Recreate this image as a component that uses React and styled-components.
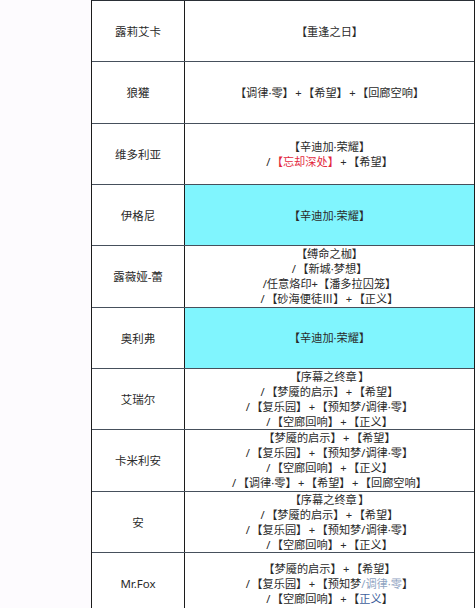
import React from 'react';
import styled, { createGlobalStyle } from 'styled-components';

const GlobalStyle = createGlobalStyle`
  html, body {
    margin: 0;
    padding: 0;
    background: #fdfbfe;
  }
  * {
    box-sizing: border-box;
  }
`;

const Page = styled.div`
  padding-left: 91px;
  height: 608px;
  overflow: hidden;
  font-family: "Noto Sans", "Noto Sans CJK SC", sans-serif;
  color: #2a2a2a;
`;

const Table = styled.div`
  width: 384px;
  border-top: 1px solid #2a2f36;
  border-left: 1px solid #1c1c1c;
  border-right: 1px solid #1c1c1c;
  background: #fff;
`;

const Row = styled.div`
  display: grid;
  grid-template-columns: 93px 1fr;
  height: 61.33px;
  border-bottom: 1px solid #46505c;
`;

const NameCell = styled.div`
  display: flex;
  align-items: center;
  justify-content: center;
  border-right: 1px solid #1c1c1c;
  font-size: 11.5px;
  white-space: nowrap;
`;

const ItemCell = styled.div`
  display: flex;
  flex-direction: column;
  align-items: center;
  justify-content: center;
  background: ${(p) => (p.$hl ? '#80f5fe' : '#fff')};
  font-size: 11.2px;
  line-height: 15px;
  word-spacing: -1.5px;
  white-space: nowrap;
  overflow: hidden;
`;

const Line = styled.div`
  text-align: center;
`;

const Red = styled.span`
  color: #e3283d;
`;

const Faded = styled.span`
  color: ${(p) => p.$tone || '#8fa3c2'};
`;

const rows = [
  { name: '露莉艾卡', lines: ['【重逢之日】'] },
  { name: '狼獾', lines: ['【调律·零】 + 【希望】 + 【回廊空响】'] },
  {
    name: '维多利亚',
    lines: [
      '【辛迪加·荣耀】',
      <>/ <Red>【忘却深处】</Red> + 【希望】</>,
    ],
  },
  { name: '伊格尼', hl: true, lines: ['【辛迪加·荣耀】'] },
  {
    name: '露薇娅-蕾',
    lines: ['【缚命之枷】', '/ 【新城·梦想】', '/任意烙印+【潘多拉囚笼】', '/ 【砂海便徒Ⅲ】 + 【正义】'],
  },
  { name: '奥利弗', hl: true, lines: ['【辛迪加·荣耀】'] },
  {
    name: '艾瑞尔',
    lines: ['【序幕之终章 】', '/ 【梦魇的启示】 + 【希望】', '/ 【复乐园】 + 【预知梦/调律·零】', '/ 【空廊回响】 + 【正义】'],
  },
  {
    name: '卡米利安',
    lines: ['【梦魇的启示】 + 【希望】', '/ 【复乐园】 + 【预知梦/调律·零】', '/ 【空廊回响】 + 【正义】', '/ 【调律·零】 + 【希望】 + 【回廊空响】'],
  },
  {
    name: '安',
    lines: ['【序幕之终章 】', '/ 【梦魇的启示】 + 【希望】', '/ 【复乐园】 + 【预知梦/调律·零】', '/ 【空廊回响】 + 【正义】'],
  },
  {
    name: 'Mr.Fox',
    lines: [
      '【梦魇的启示】 + 【希望】',
      <>/ 【复乐园】 + 【预知梦<Faded>/调律·零</Faded>】</>,
      <>/ 【空廊回响】 + 【<Faded $tone="#3f5f9c">正义</Faded>】</>,
    ],
  },
];

export default function App() {
  return (
    <Page>
      <GlobalStyle />
      <Table>
        {rows.map((r) => (
          <Row key={r.name}>
            <NameCell>{r.name}</NameCell>
            <ItemCell $hl={r.hl}>
              {r.lines.map((l, i) => (
                <Line key={i}>{l}</Line>
              ))}
            </ItemCell>
          </Row>
        ))}
      </Table>
    </Page>
  );
}
